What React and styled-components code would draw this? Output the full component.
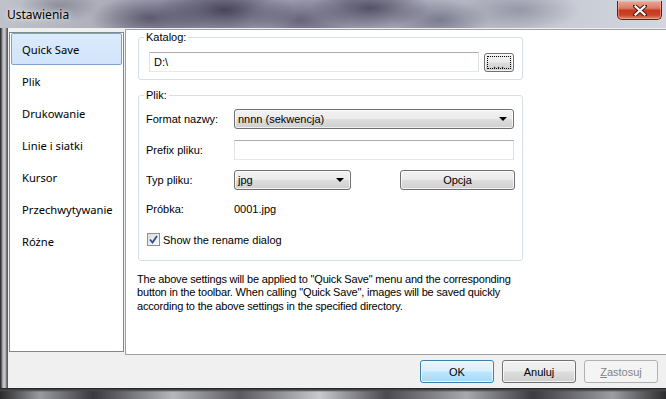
import React from 'react';
import styled, { createGlobalStyle } from 'styled-components';

const seg = `"Noto Sans", "Open Sans", sans-serif`;
const tah = `"Liberation Sans", Arial, sans-serif`;

const GlobalStyle = createGlobalStyle`
  html, body {
    margin: 0;
    padding: 0;
    width: 666px;
    height: 399px;
    overflow: hidden;
    background: #2a2a2e;
  }
`;

// Window with the blurred glass frame
const Window = styled.div`
  width: 666px;
  height: 399px;
  display: grid;
  grid-template-rows: 28px 1fr 11px;
  background:
    radial-gradient(ellipse 60px 22px at 150px 18px, rgba(70, 66, 90, 0.75), transparent),
    radial-gradient(ellipse 70px 26px at 225px 10px, rgba(50, 46, 70, 0.8), transparent),
    radial-gradient(ellipse 50px 22px at 300px 20px, rgba(80, 76, 100, 0.7), transparent),
    radial-gradient(ellipse 60px 20px at 370px 8px, rgba(60, 58, 82, 0.75), transparent),
    radial-gradient(ellipse 50px 20px at 440px 20px, rgba(90, 88, 112, 0.6), transparent),
    radial-gradient(ellipse 60px 22px at 520px 10px, rgba(110, 108, 130, 0.5), transparent),
    radial-gradient(ellipse 40px 16px at 60px 6px, rgba(90, 90, 105, 0.45), transparent),
    linear-gradient(90deg, #bfc2ca 0%, #aeafbb 15%, #9796a8 28%, #a6a5b6 40%, #9392a4 52%, #aeb0bd 66%, #c6cad3 82%, #d3d6de 100%);
`;

const TitleBar = styled.div`
  display: flex;
  justify-content: space-between;
  align-items: flex-start;
  padding: 0 4px 0 7px;
`;

const Title = styled.div`
  font-family: ${seg};
  font-size: 12px;
  line-height: 30px;
  color: #000;
  text-shadow: 0 0 8px rgba(255, 255, 255, 0.9), 0 0 3px rgba(255, 255, 255, 0.8);
`;

const CloseButton = styled.div`
  width: 43px;
  height: 18px;
  margin-top: 1px;
  border: 1px solid #5c1f14;
  border-top: none;
  border-radius: 0 0 5px 5px;
  background: linear-gradient(#eaa896 0%, #dc7c64 40%, #c8381c 52%, #cc4428 78%, #e48a6a 100%);
  box-shadow: inset 0 0 0 1px rgba(255, 200, 180, 0.45);
  display: flex;
  align-items: center;
  justify-content: center;
`;

const Middle = styled.div`
  display: flex;
  min-height: 0;
`;

const SideFrame = styled.div`
  width: 8px;
  background: linear-gradient(90deg, #2e2e30 0, #3a3a3c 1px, #8c8d92 2px, #cfd0d4 4px, #a2a3a8 6px, #4a4a4e 7px, #6e6f74 8px);
`;

const BottomFrame = styled.div`
  background:
    linear-gradient(#1e1e20 0, #4a4a4e 2px, rgba(0,0,0,0) 4px),
    linear-gradient(90deg, #2a2a2c 0%, #9a9ba0 6%, #3a3a3e 14%, #b6b7bc 26%, #5a5a60 36%, #c8c9ce 48%, #4a4a50 58%, #a8a9ae 70%, #3c3c40 80%, #9c9da2 92%, #2c2c2e 100%);
`;

const Client = styled.div`
  flex: 1;
  background: #f0f0f0;
  display: grid;
  grid-template-columns: 115px 1fr;
  grid-template-rows: 325px 1fr;
  padding: 1px 0 0 1px;
`;

// Left category list
const NavList = styled.div`
  margin-top: 3px;
  height: 318px;
  background: #fff;
  border: 1px solid #828790;
  padding: 0 1px;
  display: flex;
  flex-direction: column;
`;

const NavItem = styled.div`
  height: 32px;
  box-sizing: border-box;
  display: flex;
  align-items: center;
  padding-left: 10px;
  font-family: ${seg};
  font-size: 11.2px;
  color: #000;
  border: 1px solid ${({ $active }) => ($active ? '#7da2ce' : 'transparent')};
  border-radius: 2px;
  background: ${({ $active }) => ($active ? 'linear-gradient(#dcebfc, #d1e4fa)' : 'transparent')};
`;

// Right settings page
const Page = styled.div`
  margin-left: 1px;
  height: 323px;
  background: #fff;
  border: 1px solid #a0a0a0;
  border-right: none;
  padding: 1px 0 0 12px;
  font-family: ${tah};
  font-size: 11px;
  color: #000;
`;

const Group = styled.fieldset`
  width: 385px;
  box-sizing: border-box;
  margin: 0 0 ${({ $gap }) => $gap || 0}px 0;
  padding: ${({ $pad }) => $pad};
  border: 1px solid #d5dfe5;
  border-radius: 3px;
  min-width: 0;
`;

const Legend = styled.legend`
  margin-left: ${({ $ml }) => $ml}px;
  padding: 0 2px;
  font-size: 11px;
  line-height: 13px;
`;

const Row = styled.div`
  display: flex;
  align-items: center;
  gap: ${({ $gap }) => $gap || 0}px;
`;

const FieldRow = styled.div`
  display: grid;
  grid-template-columns: 88px auto 1fr;
  align-items: center;
  height: ${({ $h }) => $h || 20}px;
  margin-bottom: ${({ $mb }) => $mb || 0}px;
`;

const TextBox = styled.div`
  width: ${({ $w }) => $w}px;
  height: 20px;
  box-sizing: border-box;
  border: 1px solid #abadb3;
  border-left-color: #e2e3ea;
  border-right-color: #dbdfe6;
  border-bottom-color: #e3e9ef;
  background: #fff;
  padding-left: 4px;
  display: flex;
  align-items: center;
`;

const Combo = styled.div`
  width: ${({ $w }) => $w}px;
  height: 20px;
  box-sizing: border-box;
  border: 1px solid #707070;
  border-radius: 3px;
  background: linear-gradient(#f2f2f2 0%, #ebebeb 48%, #dddddd 52%, #cfcfcf 100%);
  box-shadow: inset 0 0 0 1px rgba(255, 255, 255, 0.7);
  display: flex;
  align-items: center;
  justify-content: space-between;
  padding: 0 6px 0 3px;
`;

const Arrow = styled.span`
  width: 0;
  height: 0;
  border-left: 4px solid transparent;
  border-right: 4px solid transparent;
  border-top: 4px solid #000;
`;

const Button = styled.div`
  width: ${({ $w }) => $w}px;
  height: ${({ $h }) => $h || 23}px;
  box-sizing: border-box;
  border: 1px solid ${({ $variant }) =>
    $variant === 'default' ? '#3c7fb1' : $variant === 'disabled' ? '#adb2b5' : '#707070'};
  border-radius: 3px;
  background: ${({ $variant }) =>
    $variant === 'default'
      ? 'linear-gradient(#eaf6fd 0%, #d9f0fc 48%, #bee6fd 52%, #a7d9f5 100%)'
      : $variant === 'disabled'
      ? '#f4f4f4'
      : 'linear-gradient(#f2f2f2 0%, #ebebeb 48%, #dddddd 52%, #cfcfcf 100%)'};
  box-shadow: inset 0 0 0 1px ${({ $variant }) => ($variant === 'disabled' ? '#f4f4f4' : 'rgba(255,255,255,0.75)')};
  color: ${({ $variant }) => ($variant === 'disabled' ? '#838383' : '#000')};
  font-family: ${tah};
  font-size: 11px;
  display: flex;
  align-items: center;
  justify-content: center;
  position: relative;
`;

const FocusRing = styled.span`
  position: absolute;
  inset: 2px;
  border: 1px dotted #000;
  border-radius: 1px;
`;

const Dots = styled.span`
  margin-top: 3px;
  letter-spacing: 1px;
`;

const CheckBox = styled.span`
  width: 13px;
  height: 13px;
  box-sizing: border-box;
  border: 1px solid #8e8f8f;
  background: linear-gradient(135deg, #dcdcdc, #fbfbfb);
  display: flex;
  align-items: center;
  justify-content: center;
  margin-left: 1px;
`;

const Note = styled.div`
  margin-top: 12px;
  margin-left: -1px;
  line-height: 13.4px;
  letter-spacing: -0.18px;
`;

const Footer = styled.div`
  grid-column: 1 / -1;
  display: flex;
  justify-content: flex-end;
  gap: 8px;
  padding: 6px 8px 0 0;
`;

const Underline = styled.span`
  text-decoration: underline;
`;

const navItems = ['Quick Save', 'Plik', 'Drukowanie', 'Linie i siatki', 'Kursor', 'Przechwytywanie', 'Różne'];

export default function App() {
  return (
    <>
      <GlobalStyle />
      <Window>
        <TitleBar>
          <Title>Ustawienia</Title>
          <CloseButton>
            <svg width="14" height="11" viewBox="0 0 14 11">
              <path d="M2 1 L12 10 M12 1 L2 10" stroke="#4a1a10" strokeWidth="4" strokeLinecap="square" />
              <path d="M2.5 1.5 L11.5 9.5 M11.5 1.5 L2.5 9.5" stroke="#fff" strokeWidth="2.2" strokeLinecap="square" />
            </svg>
          </CloseButton>
        </TitleBar>
        <Middle>
          <SideFrame />
          <Client>
            <NavList>
              {navItems.map((item, i) => (
                <NavItem key={item} $active={i === 0}>{item}</NavItem>
              ))}
            </NavList>
            <Page>
              <Group $pad="8px 8px 7px 10px" $gap={9}>
                <Legend $ml={-5}>Katalog:</Legend>
                <Row $gap={5}>
                  <TextBox $w={330}>D:\</TextBox>
                  <Button $w={30} $h={19}>
                    <FocusRing />
                    <Dots>...</Dots>
                  </Button>
                </Row>
              </Group>
              <Group $pad="7px 7px 14px 7px">
                <Legend $ml={-2}>Plik:</Legend>
                <FieldRow $mb={11}>
                  <span>Format nazwy:</span>
                  <Combo $w={280}>
                    <span>nnnn (sekwencja)</span>
                    <Arrow />
                  </Combo>
                </FieldRow>
                <FieldRow $mb={10}>
                  <span>Prefix pliku:</span>
                  <TextBox $w={280} />
                </FieldRow>
                <FieldRow $mb={9}>
                  <span>Typ pliku:</span>
                  <Combo $w={117}>
                    <span>jpg</span>
                    <Arrow />
                  </Combo>
                  <Row style={{ justifyContent: 'flex-end' }}>
                    <Button $w={115} $h={20}>Opcja</Button>
                  </Row>
                </FieldRow>
                <FieldRow $mb={14}>
                  <span>Próbka:</span>
                  <span>0001.jpg</span>
                </FieldRow>
                <Row $gap={3}>
                  <CheckBox>
                    <svg width="9" height="9" viewBox="0 0 9 9">
                      <path d="M1 4.5 L3.5 7.5 L8 1" fill="none" stroke="#2a4f8f" strokeWidth="1.8" />
                    </svg>
                  </CheckBox>
                  <span>Show the rename dialog</span>
                </Row>
              </Group>
              <Note>
                <div>The above settings will be applied to "Quick Save" menu and the corresponding</div>
                <div>button in the toolbar. When calling "Quick Save", images will be saved quickly</div>
                <div>according to the above settings in the specified directory.</div>
              </Note>
            </Page>
            <Footer>
              <Button $w={74} $variant="default">OK</Button>
              <Button $w={74}>Anuluj</Button>
              <Button $w={74} $variant="disabled"><Underline>Z</Underline>astosuj</Button>
            </Footer>
          </Client>
        </Middle>
        <BottomFrame />
      </Window>
    </>
  );
}
